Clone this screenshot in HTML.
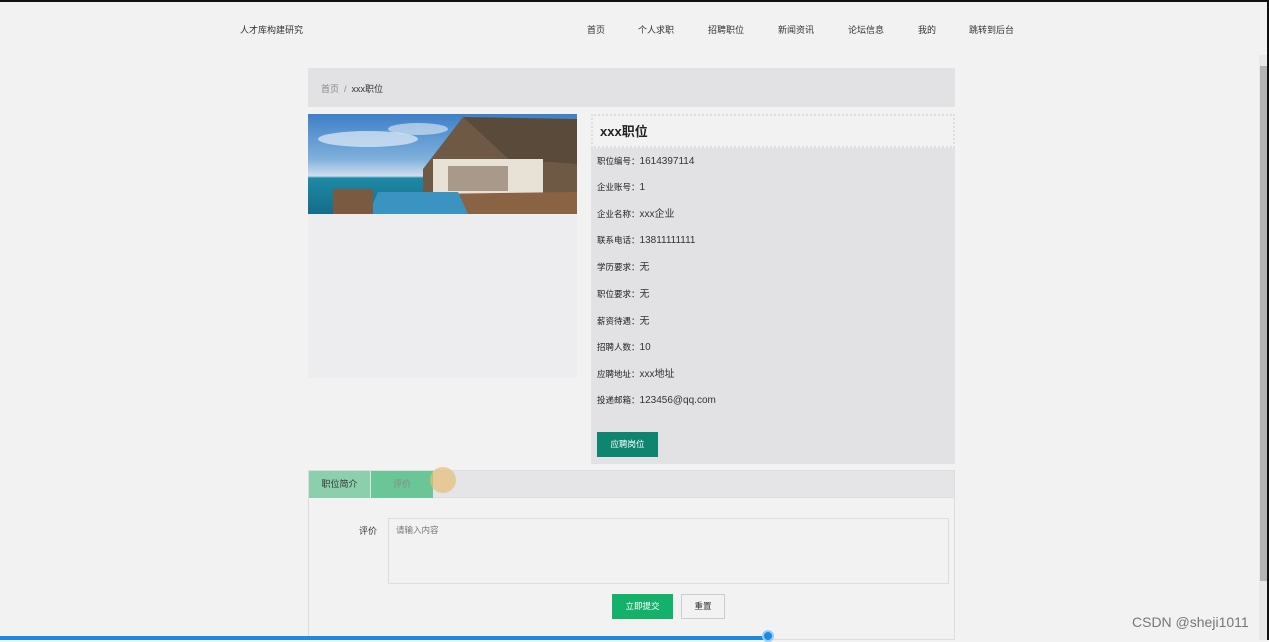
<!DOCTYPE html>
<html><head><meta charset="utf-8"><style>
*{margin:0;padding:0;box-sizing:border-box}
body{width:1269px;height:640px;overflow:hidden;background:#f2f2f2;font-family:"Liberation Sans","Noto Sans CJK SC",sans-serif;position:relative;font-size:10px;color:#333}
.bt{position:absolute;left:0;top:0;width:1269px;height:2px;background:#111}
.br{position:absolute;right:0;top:0;width:2px;height:640px;background:#111}
.logo{position:absolute;left:240px;top:23px;font-size:9px}
.nav a{position:absolute;top:23px;font-size:9px;color:#333;text-decoration:none}
.crumb{position:absolute;left:308px;top:68px;width:647px;height:39px;background:#e2e2e4;font-size:9px;padding:14px 0 0 13px;color:#888}
.crumb b{font-weight:normal;color:#333}
.img{position:absolute;left:308px;top:114px;width:269px;height:264px;background:#ededef;overflow:hidden}
.pic{width:269px;height:100px;position:relative;overflow:hidden;background:linear-gradient(180deg,#3f7fc8 0%,#7fb0dc 45%,#cfdfee 62%,#1d8aa6 64%,#156c8a 100%)}
.info{position:absolute;left:591px;top:114px;width:364px;height:350px;background:#e2e2e4}
.title{height:34px;background:#f2f2f2;border:2px dotted #ddd;font-size:13px;font-weight:bold;padding:6px 0 0 7px;line-height:20px;color:#222}
.row{position:absolute;left:6px;font-size:10px;color:#333;line-height:12px;height:12px;white-space:nowrap}
.row span{font-size:8.5px;color:#222;line-height:12px;vertical-align:baseline}
.apply{position:absolute;left:6px;top:318px;width:61px;height:25px;background:#0d8570;color:#fff;font-size:8.5px;text-align:center;line-height:25px}
.tabs{position:absolute;left:308px;top:470px;width:647px;height:170px;border:1px solid #ddd;background:#f2f2f2}
.tb{height:27px;background:#e5e5e7;border-bottom:1px solid #ddd;position:relative}
.t1{position:absolute;left:0;top:0;width:61px;height:27px;background:#8ccfad;font-size:9px;text-align:center;line-height:27px;color:#333}
.t2{position:absolute;left:62px;top:0;width:62px;height:27px;background:#6ac696;font-size:9px;text-align:center;line-height:27px;color:#888}
.cur{position:absolute;left:121px;top:-4px;width:26px;height:26px;border-radius:50%;background:rgba(230,190,120,.7)}
.lbl{position:absolute;left:50px;top:53px;font-size:9px}
.ta{position:absolute;left:79px;top:47px;width:561px;height:66px;border:1px solid #ddd;background:#f2f2f2;font-size:8.5px;color:#777;padding:5px 7px}
.sub{position:absolute;left:303px;top:123px;width:61px;height:25px;background:#13b16a;color:#fff;font-size:8.5px;text-align:center;line-height:25px}
.rst{position:absolute;left:372px;top:123px;width:44px;height:25px;border:1px solid #ccc;background:#f2f2f2;font-size:8.5px;text-align:center;line-height:23px}
.bar{position:absolute;left:0;top:636px;width:770px;height:4px;background:#1a8ae6}
.knob{position:absolute;left:762px;top:630px;width:12px;height:12px;border-radius:50%;background:#1a8ae6;border:2px solid #9ccaf3}
.sb{position:absolute;left:1259px;top:55px;width:8px;height:585px;background:#e8e8e8}
.th{position:absolute;left:1260px;top:66px;width:7px;height:515px;background:#b4b4b4}
.wm{position:absolute;left:1132px;top:614px;font-size:14px;color:#777}
</style></head><body>
<div class="bt"></div>
<div class="logo">人才库构建研究</div>
<div class="nav">
<a style="left:587px">首页</a><a style="left:638px">个人求职</a><a style="left:708px">招聘职位</a><a style="left:778px">新闻资讯</a><a style="left:848px">论坛信息</a><a style="left:918px">我的</a><a style="left:969px">跳转到后台</a>
</div>
<div class="crumb">首页 &nbsp;/&nbsp; <b>xxx职位</b></div>
<div class="img"><div class="pic">
<svg width="269" height="100" style="position:absolute;left:0;top:0">
<ellipse cx="60" cy="25" rx="50" ry="8" fill="#e4eef8" opacity=".7"/>
<ellipse cx="110" cy="15" rx="30" ry="6" fill="#e4eef8" opacity=".6"/>
<polygon points="115,55 155,3 200,45 269,45 269,100 115,100" fill="#6e5a44"/>
<polygon points="155,3 269,5 269,50 200,45" fill="#5a4a3a"/>
<rect x="125" y="45" width="110" height="40" fill="#e8e2d6"/>
<rect x="140" y="52" width="60" height="25" fill="#a8998a"/>
<polygon points="100,100 120,80 269,78 269,100" fill="#8a6244"/>
<polygon points="60,100 70,78 150,78 160,100" fill="#3a93c0"/>
<rect x="25" y="75" width="40" height="25" fill="#7a5a40"/>
</svg></div></div>
<div class="info">
<div class="title">xxx职位</div>
<div class="row" style="top:41px"><span>职位编号：</span>1614397114</div>
<div class="row" style="top:67px"><span>企业账号：</span>1</div>
<div class="row" style="top:94px"><span>企业名称：</span>xxx企业</div>
<div class="row" style="top:120px"><span>联系电话：</span>13811111111</div>
<div class="row" style="top:147px"><span>学历要求：</span>无</div>
<div class="row" style="top:174px"><span>职位要求：</span>无</div>
<div class="row" style="top:201px"><span>薪资待遇：</span>无</div>
<div class="row" style="top:227px"><span>招聘人数：</span>10</div>
<div class="row" style="top:254px"><span>应聘地址：</span>xxx地址</div>
<div class="row" style="top:280px"><span>投递邮箱：</span>123456@qq.com</div>
<div class="apply">应聘岗位</div>
</div>
<div class="tabs">
<div class="tb"><div class="t1">职位简介</div><div class="t2">评价</div><div class="cur"></div></div>
<div class="lbl">评价</div>
<div class="ta">请输入内容</div>
<div class="sub">立即提交</div>
<div class="rst">重置</div>
</div>
<div class="bar"></div><div class="knob"></div>
<div class="sb"></div><div class="th"></div>
<div class="wm">CSDN @sheji1011</div>
<div class="br"></div>
</body></html>
